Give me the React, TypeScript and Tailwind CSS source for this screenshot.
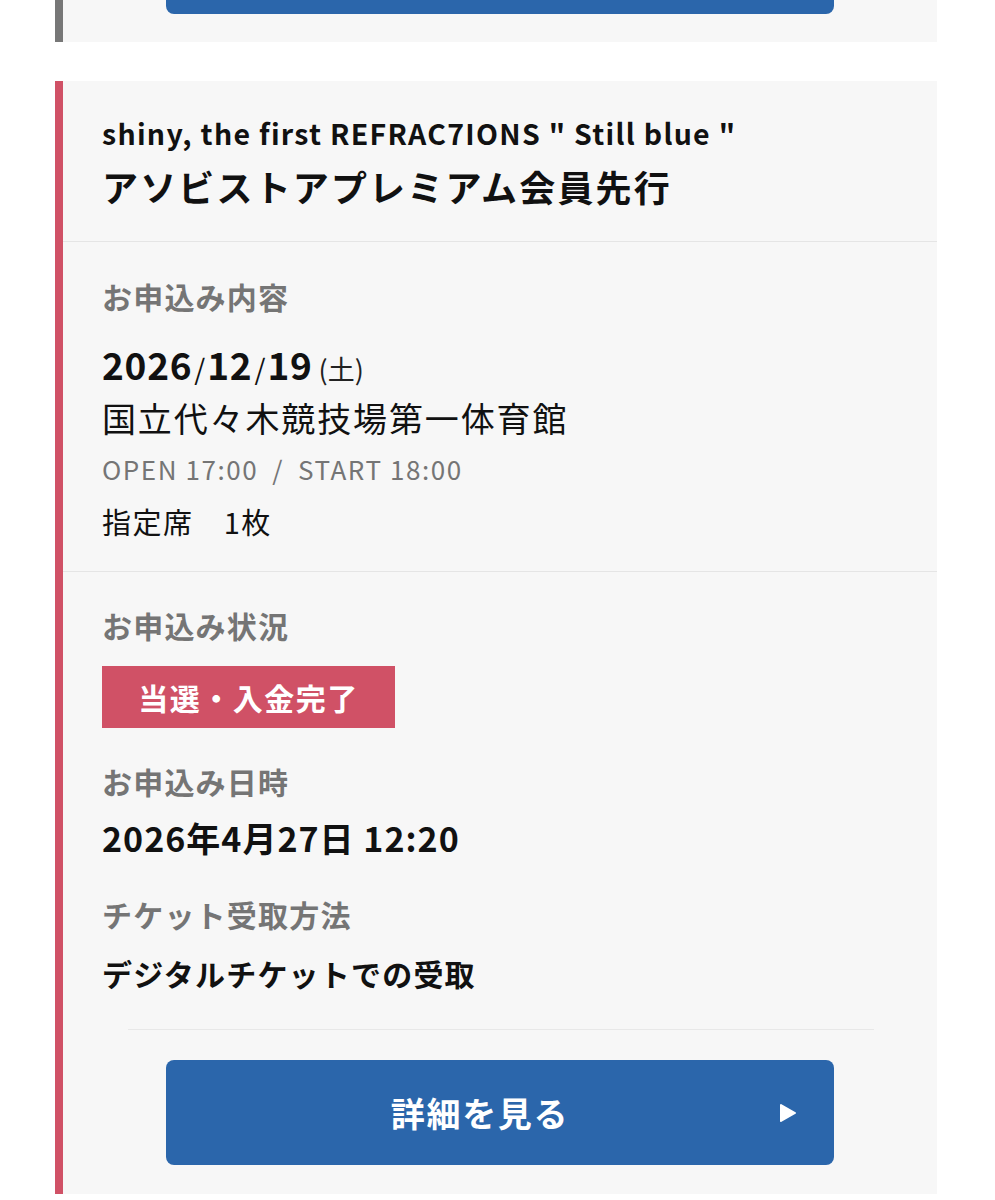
import React from "react";

const F = { fontFamily: '"Noto Sans CJK JP", "Noto Sans", sans-serif' };

function Divider() {
  return <div className="h-px bg-[#e5e5e5]" />;
}

export default function App() {
  return (
    <div className="min-h-[1200px] bg-white text-[#111]" style={F}>
      {/* previous card */}
      <div className="ml-[55px] mr-[58px] h-[42px] border-l-8 border-[#777] bg-[#f7f7f7]">
        <div className="mx-auto h-[14px] w-[668px] rounded-b-lg bg-[#2b66ab]" />
      </div>

      <div className="h-[39px]" />

      {/* main card */}
      <div className="ml-[55px] mr-[58px] border-l-8 border-[#d05166] bg-[#f7f7f7] pb-[29px]">
        <div className="px-[39px] pt-[31px] pb-[28px]">
          <div className="text-[28.5px] leading-[42px] font-semibold tracking-[0.045em]">
            shiny, the first REFRAC7IONS " Still blue "
          </div>
          <div className="mt-[5px] text-[36px] leading-[54px] font-bold tracking-[0.06em]">
            アソビストアプレミアム会員先行
          </div>
        </div>
        <Divider />
        <div className="px-[39px] pt-[34px] pb-[30px]">
          <div className="text-[30px] leading-[40px] font-bold tracking-[0.04em] text-[#757575]">お申込み内容</div>
          <div className="mt-[24px] flex items-baseline leading-[48px]">
            <span className="text-[37px] font-bold tracking-[0.02em]">2026</span>
            <span className="mx-[2px] text-[28px]">/</span>
            <span className="text-[37px] font-bold tracking-[0.02em]">12</span>
            <span className="mx-[2px] text-[28px]">/</span>
            <span className="text-[37px] font-bold tracking-[0.02em]">19</span>
            <span className="ml-[6px] text-[27px] text-[#222]">(土)</span>
          </div>
          <div className="mt-[3px] text-[34px] leading-[44px] tracking-[0.055em]">国立代々木競技場第一体育館</div>
          <div className="mt-[11px] text-[26px] leading-[36px] tracking-[0.06em] text-[#757575]">
            OPEN 17:00<span className="mx-[14px]">/</span>START 18:00
          </div>
          <div className="mt-[14px] text-[29px] leading-[40px] tracking-[0.05em]">指定席　1枚</div>
        </div>
        <Divider />
        <div className="px-[39px] pt-[33px]">
          <div className="text-[30px] leading-[40px] font-bold tracking-[0.04em] text-[#757575]">お申込み状況</div>
          <div className="mt-[21px] flex h-[62px] w-[293px] items-center justify-center bg-[#d05166] text-[30px] font-bold tracking-[0.05em] text-white">
            当選・入金完了
          </div>
          <div className="mt-[33px] text-[30px] leading-[40px] font-bold tracking-[0.04em] text-[#757575]">お申込み日時</div>
          <div className="mt-[15px] text-[34px] leading-[44px] font-bold tracking-[0.03em]">2026年4月27日 12:20</div>
          <div className="mt-[34px] text-[30px] leading-[40px] font-bold tracking-[0.04em] text-[#757575]">チケット受取方法</div>
          <div className="mt-[19px] text-[30px] leading-[40px] font-bold tracking-[0.04em]">デジタルチケットでの受取</div>
        </div>
        <div className="mt-[36px] ml-[65px] mr-[63px] h-px bg-[#e8e8e8]" />
        <div className="mt-[30px] flex justify-center">
          <div className="relative flex h-[105px] w-[668px] items-center justify-center rounded-lg bg-[#2b66ab] text-[34px] font-bold tracking-[0.05em] text-white">
            <span className="-ml-[40px]">詳細を見る</span>
            <svg className="absolute right-[37px] top-1/2 -translate-y-1/2" width="18" height="20" viewBox="0 0 18 20">
              <path d="M2 2 L16 10 L2 18 Z" fill="white" stroke="white" strokeWidth="2" strokeLinejoin="round" />
            </svg>
          </div>
        </div>
      </div>
    </div>
  );
}
